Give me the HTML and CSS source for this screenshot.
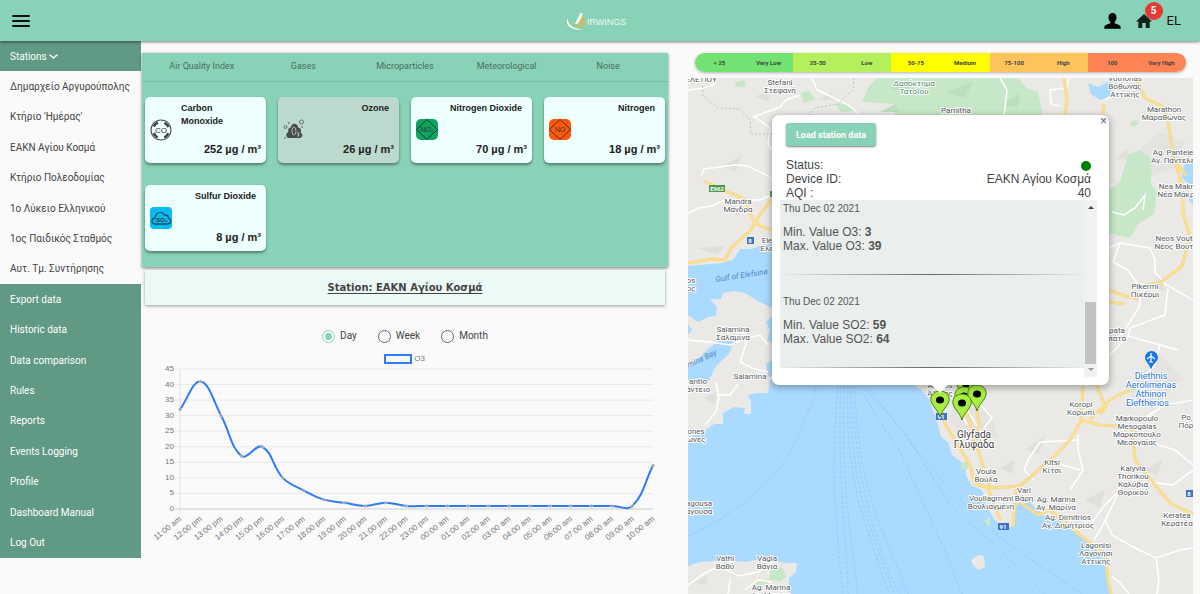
FILE: index.html
```html
<!DOCTYPE html>
<html lang="en">
<head>
    <meta charset="UTF-8">
    <meta name="viewport" content="width=device-width, initial-scale=1.0">
    <title>Airwings</title>
    <link rel="stylesheet" href="styles.css">
</head>
<body>
    <header class="topbar">
        <button class="icon-btn menu-btn" aria-label="Menu">
            <svg width="18" height="12" viewBox="0 0 18 12"><path d="M1 1h16M1 6h16M1 11h16" stroke="#111" stroke-width="2" stroke-linecap="round"/></svg>
        </button>
        <a class="logo" href="#" aria-label="Airwings">
            <svg width="62" height="20" viewBox="0 0 62 20">
                <path d="M2 7C-2 14 5 20 17 18.500C8 18 1 14 2 7Z" fill="#fff"/>
                <path d="M9 13L14 2.500 16.500 2 16 6.500 11.500 13z" fill="#fff"/>
                <path d="M16 5l4.500 9h-2.500l-2-3-3 2z" fill="#e9b23c"/>
                <circle cx="4" cy="11" r="1" fill="#e9b23c"/>
                <circle cx="7" cy="14" r="1" fill="#e9b23c"/>
                <circle cx="11" cy="15" r="1.300" fill="#e9b23c"/>
                <circle cx="15" cy="16" r="1.500" fill="#e9b23c"/>
                <text x="21" y="14">IRWINGS</text>
            </svg>
        </a>
        <nav class="top-actions">
            <button class="icon-btn" aria-label="Profile">
                <svg width="17" height="16" viewBox="0 0 17 16"><path d="M8.500 0C11 0 12.500 1.700 12.500 4.200C12.500 6.500 11.500 8.300 10.500 9.200V10.200C13 11.200 16.700 11.700 16.700 14.500V15.700H.3V14.500C.3 11.700 4 11.200 6.500 10.200V9.200C5.500 8.300 4.500 6.500 4.500 4.200C4.500 1.700 6 0 8.500 0Z"/></svg>
            </button>
            <button class="icon-btn home-btn" aria-label="Home">
                <svg width="16" height="14" viewBox="0 0 16 14"><path d="M8 0L0 7.500h2.300V14h4V9h3.400v5h4V7.500H16z" fill="#12211c"/></svg>
                <span class="badge">5</span>
            </button>
            <button class="icon-btn lang-btn">EL</button>
        </nav>
    </header>

    <div class="page">
        <aside class="sidebar">
            <button class="stations-btn">Stations
                <svg width="9" height="7" viewBox="0 0 9 7"><path d="M1 2l3.500 3L8 2" fill="none" stroke="#fff" stroke-width="1.600" stroke-linecap="round"/></svg>
            </button>
            <ul class="stations">
                <li><a href="#">Δημαρχείο Αργυρούπολης</a></li>
                <li><a href="#">Κτήριο 'Ημέρας'</a></li>
                <li><a href="#">ΕΑΚΝ Αγίου Κοσμά</a></li>
                <li><a href="#">Κτήριο Πολεοδομίας</a></li>
                <li><a href="#">1ο Λύκειο Ελληνικού</a></li>
                <li><a href="#">1ος Παιδικός Σταθμός</a></li>
                <li><a href="#">Αυτ. Τμ. Συντήρησης</a></li>
            </ul>
            <ul class="menu">
                <li><a href="#">Export data</a></li>
                <li><a href="#">Historic data</a></li>
                <li><a href="#">Data comparison</a></li>
                <li><a href="#">Rules</a></li>
                <li><a href="#">Reports</a></li>
                <li><a href="#">Events Logging</a></li>
                <li><a href="#">Profile</a></li>
                <li><a href="#">Dashboard Manual</a></li>
                <li><a href="#">Log Out</a></li>
            </ul>
        </aside>

        <main class="content">
            <section class="data-col">
                <div class="panel">
                    <div class="tabs">
                        <button>Air Quality Index</button>
                        <button>Gases</button>
                        <button>Microparticles</button>
                        <button>Meteorological</button>
                        <button>Noise</button>
                    </div>
                    <div class="cards">
                        <article class="card">
                            <svg class="card-icon" viewBox="0 0 22 22">
                                <circle cx="11" cy="11" r="10" fill="none" stroke="#555" stroke-width="1.200"/>
                                <circle cx="11" cy="11" r="8" fill="none" stroke="#444" stroke-width="2.500" stroke-dasharray="6 6.560" stroke-dashoffset="-3.300"/>
                                <text x="11" y="14" font-size="8">CO</text>
                            </svg>
                            <h3>Carbon Monoxide</h3>
                            <p>252 µg / m³</p>
                        </article>
                        <article class="card selected">
                            <svg class="card-icon" viewBox="0 0 22 22">
                                <path d="M6 19C2.500 19 2.500 14 5.500 13C4.500 10 6 8.500 8 8.500C8 3.500 15 3.500 15 8.500C18 8.500 18.500 12 17.500 13.500C20.500 15 19.500 19 16.500 19Z" fill="#454d49"/>
                                <ellipse cx="11" cy="12" rx="2" ry="4" fill="none" stroke="#aebfb7"/>
                                <path d="M14 14h2l-1 2h1v1h-2" fill="none" stroke="#aebfb7"/>
                                <g fill="none" stroke="#65736c"><circle cx="2.500" cy="8" r="1.500"/><circle cx="18.500" cy="3" r="2"/><circle cx="6" cy="4" r=".5"/><circle cx="2" cy="19" r=".5"/><circle cx="19" cy="8" r=".5"/></g>
                            </svg>
                            <h3>Ozone</h3>
                            <p>26 µg / m³</p>
                        </article>
                        <article class="card">
                            <svg class="card-icon" viewBox="0 0 22 22">
                                <rect width="22" height="21" rx="5" fill="#0ba55f"/>
                                <path d="M11 .5L21.500 10.500 11 20.500.5 10.500z" fill="none" stroke="#15342a"/>
                                <text x="11" y="13" font-size="7">NO₂</text>
                            </svg>
                            <h3>Nitrogen Dioxide</h3>
                            <p>70 µg / m³</p>
                        </article>
                        <article class="card">
                            <svg class="card-icon" viewBox="0 0 22 22">
                                <rect width="22" height="21" rx="5" fill="#ff5a0a"/>
                                <path d="M11 .5L21.500 10.500 11 20.500.5 10.500z" fill="none" stroke="#4a2a1c"/>
                                <text x="11" y="13" font-size="7">NO</text>
                            </svg>
                            <h3>Nitrogen</h3>
                            <p>18 µg / m³</p>
                        </article>
                        <article class="card">
                            <svg class="card-icon" viewBox="0 0 22 22">
                                <rect width="22" height="22" rx="4" fill="#08bcf2"/>
                                <path d="M5.500 17C1 17 1 11.500 5 11C5.500 6 11 3 14.500 8C18 8 18.500 10.500 18.500 11.500C22 12.500 21 17 17.500 17Z" fill="none" stroke="#124e66" stroke-width="1.300"/>
                                <text x="12" y="15" font-size="6" font-weight="bold">SO₂</text>
                            </svg>
                            <h3>Sulfur Dioxide</h3>
                            <p>8 µg / m³</p>
                        </article>
                    </div>
                </div>
                <h2 class="station-title">Station: ΕΑΚΝ Αγίου Κοσμά</h2>
                <form class="range">
                    <label><input type="radio" name="range" checked> Day</label>
                    <label><input type="radio" name="range"> Week</label>
                    <label><input type="radio" name="range"> Month</label>
                </form>
                <svg id="chart" class="chart" viewBox="0 0 526 206" role="img" aria-label="O3"></svg>
            </section>

            <section class="map-col">
                <div class="scale">
                    <div class="very-low"><span>&lt; 25</span><span>Very Low</span></div>
                    <div class="low"><span>25-50</span><span>Low</span></div>
                    <div class="medium"><span>50-75</span><span>Medium</span></div>
                    <div class="high"><span>75-100</span><span>High</span></div>
                    <div class="very-high"><span>100</span><span>Very High</span></div>
                </div>
                <div class="map">
                    <svg id="map" class="map-canvas" viewBox="688 78 505 516" preserveAspectRatio="xMinYMin slice">
                        <defs>
                            <symbol id="pin" viewBox="0 0 20 28" overflow="visible">
                                <path d="M10 27C9 21 .8 15 .8 9.500C.8 4 5 1 10 1s9.200 3 9.200 8.500C19.200 15 11 21 10 27Z" fill="#a6ee3f" stroke="#4b7a1c"/>
                                <ellipse cx="10" cy="10" rx="4" ry="3.500" fill="#000"/>
                            </symbol>
                        </defs>
                        <rect x="688" y="78" width="505" height="516" fill="#aadaff"/>
                        <!-- land -->
                        <g fill="#eae9e5">
                            <path d="M688 78H1193V594H1112L1108 580V565L1100 550L1087 540L1078 531L1065 526L1055 517L1043 516L1036 509L1030 502L1017 504L1012 527L1003 528L995 520L990 512L985 503L982 490L972 486L966 476L965 465L952 455L948 442L941 437L936 418L928 397L921 390L905 380L860 320L800 235L772 241L752 249L740 249L733 260L722 263L688 266Z"/>
                            <path d="M723 293L734 291L745 293L758 301L772 308V380H770L768 393H758L748 395L751 402L751 414L744 414L745 408L734 407L723 413L723 424L714 424L706 430L688 438V380L708 382L716 366L729 354L734 340L722 338L708 349L688 369V335L692 330L688 324V315L698 322L708 317L716 316L717 307L710 299L721 299Z"/>
                            <path d="M688 566L700 562L722 560L745 562L765 558L785 563L797 563L796 572L789 578L789 594H688Z"/>
                            <path d="M974 558L978 555L984 556L985 567L978 570L973 565L971 560Z"/>
                        </g>
                        <g fill="#e0dfdb">
                            <path d="M754 97l18-8-4 12zM765 138l17-6-2 8zM695 248l30-2-8 8zM723 167l18-12-5 16zM818 100l12-8 5 8zM1115 160l12-12 3 10zM1147 285l15-8 2 14zM1025 450l20-14-6 18zM1000 468l15-8-3 14zM1085 500l20-10-5 18zM1144 470l20-12-7 17zM704 398l14-7-4 14zM694 583l14-8-2 10z"/>
                            <path d="M1140 150l20-18 25 10-10 25-25 10zM1125 390l35-36 22 25-30 30zM960 400l30 12 8 25-30 5-20-25z" opacity=".6"/>
                        </g>
                        <!-- parks -->
                        <g fill="#c6e8c8">
                            <path d="M877 78H1018L1027 88L1038 92L1043 116H895V104L862 102L868 88Z"/>
                            <path d="M1109 190L1120 182L1128 155L1140 150L1152 160L1151 184L1157 192L1154 214L1138 224L1130 238L1109 233Z"/>
                            <path d="M735 83l9-3 2 7-10 0zM770 570l12-3 4 10-5 4-11-1zM756 582l13-3-2 5-14 2zM961 464l7-4v9l-7 0zM985 519l5-3 0 12-5-4zM801 93l8-2 6 8-12 4zM835 104l12-1 8 8-14 1zM1130 122l6-2 3 4-7 3z"/>
                        </g>
                        <g fill="#bcdfbf">
                            <path d="M890 88l22-8-5 14zM945 92l28-10-8 16zM1000 105l20-12-2 14zM880 112l15-8 5 8z"/>
                        </g>
                        <g fill="#aadaff">
                            <path d="M1088 83L1098 87L1112 80L1110 97L1100 100L1091 94Z"/>
                            <path d="M1193 162L1184 165L1182 178L1193 188ZM1187 194L1193 193V204L1190 202ZM772 360l-6 4 2 12 4 1zM772 316l-6 6 4 8-3 10 5 3z"/>
                        </g>
                        <!-- ferry lines -->
                        <g fill="none" stroke="#8fc1ec" stroke-dasharray="3 2" stroke-width=".7">
                            <path d="M688 536Q742 512 774 474Q795 455 817 386M838 386Q832 450 835 500T843 594M841 386Q838 440 843 510T848 594M844 386Q842 470 850 530T857 594M848 386Q845 460 864 520T890 594M850 386Q850 465 868 520T895 594M852 386Q855 465 873 525T901 594M855 386Q856 465 882 530T908 594M858 386L902 456L940 540L962 594M862 386L903 430L950 505L1000 550L1045 594M868 386Q950 500 1010 545L1082 594"/>
                        </g>
                        <!-- local roads -->
                        <g fill="none" stroke="#fff" stroke-width="1.500">
                            <path d="M701 176L704 169L735 165L748 166L768 176L772 180M688 213L699 208L712 206L725 200L760 200L772 195M753 117L780 107L786 100L800 95M755 117L770 128L768 145L772 150M688 90L704 88L715 84M812 78L817 90L826 94L848 105L858 113M1000 78L1007 90L1004 116M1069 78L1066 88L1050 90L1051 104L1060 106M1123 78L1114 94L1105 100M688 340L710 342L730 345L748 338L760 335L768 345M748 338L740 362L752 368L768 372M716 382L719 398L716 412L705 425M716 395L730 395L738 384M688 585L705 573L720 566L738 576L758 572L775 560M730 580L728 594M745 590L758 580L772 582"/>
                            <path d="M1109 248L1120 243L1150 248L1155 260L1155 272L1165 284L1193 300M1120 243L1113 262L1128 270L1142 290L1139 307L1122 335L1109 328M1168 288L1165 315L1130 328L1128 336L1160 345L1178 350M1128 336L1109 356M1160 345L1155 365L1140 380M1078 435L1078 450L1083 470L1070 490M1078 440L1040 442L1028 460L1024 470L1034 480M1052 462L1080 470M1075 515L1090 525L1105 505L1118 492L1122 482M1105 520L1112 535L1135 548L1156 558L1180 550L1193 548M1094 540L1102 527L1118 494M1142 440L1175 450L1193 465M1141 420L1165 405L1193 400M1150 482L1173 485L1193 470M1156 558L1159 580L1157 594M1112 576L1122 585L1129 594M1112 212L1124 215L1135 208L1145 195L1143 210"/>
                            <path d="M980 404L992 418L984 428M952 398L968 426M966 408L986 440"/>
                        </g>
                        <g fill="none" stroke="#b7b6b4" stroke-dasharray="2 2" stroke-width=".8">
                            <path d="M702 78L703 96L718 108L740 109L750 120L751 134L772 134M854 78L853 90L838 104L815 108L808 116"/>
                        </g>
                        <!-- main roads -->
                        <g fill="none" stroke="#f3d384" stroke-width="3" stroke-linejoin="round">
                            <path d="M688 263L712 259L725 260L732 247L750 231L759 216L772 199M704 181L730 193L745 199L753 220L760 226L772 230"/>
                            <path d="M1064 78L1067 100L1065 116M1137 80L1145 98L1166 108L1171 140L1174 160L1186 175M1104 104L1103 115M1175 160L1183 190L1183 214L1190 236L1182 266L1160 283L1147 285M1109 290L1122 295L1138 299M1109 302L1125 304"/>
                            <path d="M1083 386L1081 420L1100 425L1120 426M1081 421L1070 440L1050 460L1020 486L990 488L975 484L970 465L958 445L946 426L938 400M1095 382L1106 408L1100 414M1137 386L1110 400L1090 419M1132 428L1135 460L1148 476L1170 503L1193 514M1016 489L1013 527M988 488L1000 520M1020 502L1038 515L1050 510L1080 535L1105 555L1108 580L1111 594M966 410L978 450L990 487M976 405L979 425L976 440"/>
                        </g>
                        <g fill="none" stroke="#fbe08e" stroke-width="2" stroke-linejoin="round">
                            <path d="M688 263L712 259L725 260L732 247L750 231L759 216L772 199M704 181L730 193L745 199L753 220L760 226L772 230"/>
                            <path d="M1064 78L1067 100L1065 116M1137 80L1145 98L1166 108L1171 140L1174 160L1186 175M1104 104L1103 115M1175 160L1183 190L1183 214L1190 236L1182 266L1160 283L1147 285M1109 290L1122 295L1138 299M1109 302L1125 304"/>
                            <path d="M1083 386L1081 420L1100 425L1120 426M1081 421L1070 440L1050 460L1020 486L990 488L975 484L970 465L958 445L946 426L938 400M1095 382L1106 408L1100 414M1137 386L1110 400L1090 419M1132 428L1135 460L1148 476L1170 503L1193 514M1016 489L1013 527M988 488L1000 520M1020 502L1038 515L1050 510L1080 535L1105 555L1108 580L1111 594M966 410L978 450L990 487M976 405L979 425L976 440"/>
                        </g>
                        <!-- road shields -->
                        <g class="shield">
                            <rect x="709" y="185" width="16" height="7" fill="#4b9a4b"/><text x="717" y="191">E962</text>
                            <rect x="747" y="237" width="7" height="7" fill="#3b74c9"/><text x="750" y="243">8</text>
                            <rect x="770" y="191" width="4" height="6" fill="#4b9a4b"/>
                            <rect x="936" y="413" width="11" height="7" fill="#3b74c9"/><text x="941" y="419">91</text>
                            <rect x="998" y="523" width="11" height="7" fill="#3b74c9"/><text x="1003" y="529">91</text>
                            <rect x="1186" y="490" width="9" height="7" fill="#3b74c9"/><text x="1189" y="496">8</text>
                        </g>
                        <g id="labels" class="labels"></g>
                        <g fill="#1a73e8">
                            <path d="M1151 370C1150 364 1145 362 1145 357.500A6.500 6.500 0 0 1 1158 357.500C1158 362 1152 364 1151 370Z"/>
                            <path d="M1151 353v9M1147 359l4-3 4 3M1149 362h4" fill="none" stroke="#fff" stroke-width="1.200"/>
                        </g>
                        <use href="#pin" x="956" y="374" width="20" height="28"/>
                        <use href="#pin" x="954" y="386" width="20" height="28"/>
                        <use href="#pin" x="967" y="384" width="20" height="28"/>
                        <use href="#pin" x="952" y="393" width="20" height="28"/>
                        <use href="#pin" x="930" y="390" width="20" height="28"/>
                    </svg>

                    <div class="popup">
                        <button class="close-btn" aria-label="Close">×</button>
                        <button class="load-btn">Load station data</button>
                        <dl class="info">
                            <div><dt>Status:</dt><dd><span class="dot"></span></dd></div>
                            <div><dt>Device ID:</dt><dd>ΕΑΚΝ Αγίου Κοσμά</dd></div>
                            <div><dt>AQI :</dt><dd>40</dd></div>
                        </dl>
                        <div class="readings">
                            <div class="readings-list">
                                <div class="reading">
                                    <time>Thu Dec 02 2021</time>
                                    <p>Min. Value O3: <b>3</b><br>Max. Value O3: <b>39</b></p>
                                </div>
                                <div class="reading">
                                    <time>Thu Dec 02 2021</time>
                                    <p>Min. Value SO2: <b>59</b><br>Max. Value SO2: <b>64</b></p>
                                </div>
                            </div>
                            <div class="scrollbar">
                                <i class="arrow up"></i>
                                <i class="thumb"></i>
                                <i class="arrow down"></i>
                            </div>
                        </div>
                    </div>
                </div>
            </section>
        </main>
    </div>
    <script src="script.js"></script>
</body>
</html>
```
FILE: styles.css
```css
* {
    box-sizing: border-box;
}

body {
    margin: 0;
    min-height: 100vh;
    display: flex;
    flex-direction: column;
    background-color: #fafafa;
    color: #444;
    font-family: Roboto, "Liberation Sans", sans-serif;
    overflow: hidden;
}

button {
    font-family: inherit;
    border: 0;
    padding: 0;
    background: none;
    cursor: pointer;
}

a {
    color: inherit;
    text-decoration: none;
}

ul {
    list-style: none;
    margin: 0;
    padding: 0;
}

/* header */
.topbar {
    position: relative;
    z-index: 2;
    display: grid;
    grid-template-columns: 1fr auto 1fr;
    align-items: center;
    height: 41px;
    padding: 0 19px 0 12px;
    background-color: #88d2b7;
    box-shadow: 0 1px 3px rgba(0, 0, 0, 0.5);
}

.icon-btn {
    display: flex;
    color: #111;
}

.logo svg {
    display: block;
}

.logo text {
    font: 9px "Liberation Sans", sans-serif;
    fill: #eefaf5;
}

.top-actions {
    display: flex;
    justify-content: flex-end;
    align-items: center;
    gap: 15px;
}

.home-btn {
    position: relative;
}

.badge {
    position: absolute;
    top: -12px;
    left: 9px;
    width: 18px;
    border-radius: 50%;
    background-color: #e53935;
    color: #fff;
    font-size: 10px;
    font-weight: bold;
    line-height: 18px;
    text-align: center;
}

.lang-btn {
    font-size: 13px;
}

.page {
    flex: 1;
    display: flex;
    align-items: flex-start;
}

/* sidebar */
.sidebar {
    display: flex;
    flex-direction: column;
    width: 141px;
    height: 87vh;
    flex-shrink: 0;
    background-color: #609984;
    font-size: 10px;
    color: #fff;
}

.stations-btn {
    flex: 1;
    padding: 0 10px;
    color: #fff;
    font-size: 10px;
    text-align: left;
}

.stations,
.menu {
    display: flex;
    flex-direction: column;
}

.stations {
    flex: 7;
    background-color: #fafafa;
    color: #444;
}

.menu {
    flex: 9;
}

.sidebar li {
    flex: 1;
    display: flex;
    align-items: center;
    padding-left: 10px;
    white-space: nowrap;
}

.content {
    flex: 1;
    display: grid;
    grid-template-columns: 526fr 505fr;
    gap: 20px;
    padding: 12px 7px 0 1px;
}

/* gases panel */
.panel {
    background-color: #88d2b7;
    box-shadow: 0 1px 3px rgba(0, 0, 0, 0.5);
}

.tabs {
    display: grid;
    grid-template-columns: repeat(5, 1fr);
    padding: 0 9px;
    border-bottom: 1px solid #78bfa5;
}

.tabs button {
    height: 28px;
    padding-bottom: 3px;
    color: #47705f;
    font-size: 9px;
}

.cards {
    display: grid;
    grid-template-columns: repeat(4, 1fr);
    gap: 22px 12px;
    padding: 15px 3px 16px;
}

.card {
    display: grid;
    grid-template-columns: 22px 1fr;
    grid-template-rows: 38px 1fr;
    height: 66px;
    padding: 5px;
    border-radius: 5px;
    background-color: #edfffe;
    box-shadow: 0 2px 3px rgba(0, 0, 0, 0.4);
    color: #222;
    font-family: "Liberation Sans", sans-serif;
}

.card.selected {
    background-color: #bcd9cd;
}

.card-icon {
    grid-row: 1 / 3;
    align-self: center;
    width: 22px;
    height: 22px;
}

.card-icon text {
    text-anchor: middle;
    fill: #333;
}

.card h3 {
    justify-self: end;
    max-width: 75px;
    margin: 0 5px 0 0;
    font-size: 9px;
    line-height: 13px;
}

.card p {
    margin: 0;
    font-size: 11px;
    font-weight: bold;
    line-height: 18px;
    text-align: right;
}

.station-title {
    margin: 3px 3px 0;
    background-color: #ebfaf6;
    box-shadow: 0 1px 3px rgba(0, 0, 0, 0.4);
    font-family: "DejaVu Sans", sans-serif;
    font-size: 10px;
    font-weight: bold;
    line-height: 35px;
    text-align: center;
    text-decoration: underline;
    text-underline-offset: 2px;
}

.range {
    display: flex;
    justify-content: center;
    gap: 21px;
    padding-top: 24px;
    font-size: 10px;
}

.range label {
    display: flex;
    align-items: center;
    gap: 5px;
    line-height: 14px;
}

.range input {
    appearance: none;
    width: 13px;
    height: 13px;
    margin: 0;
    border: 1px solid #666;
    border-radius: 50%;
}

.range input:checked {
    border-color: #88d2b7;
    background: radial-gradient(circle, #88d2b7 3px, transparent 4px);
}

.chart {
    display: block;
    width: 100%;
    margin-top: 1px;
}

.chart text {
    font: 8px "Liberation Sans", sans-serif;
    fill: #777;
    text-anchor: end;
}

/* air quality scale */
.scale {
    display: grid;
    grid-template-columns: repeat(5, 1fr);
    margin: 0 7px 6px;
    border-radius: 10px;
    overflow: hidden;
    box-shadow: 0 1px 3px rgba(0, 0, 0, 0.3);
    font-size: 6px;
    font-weight: bold;
    line-height: 19px;
    text-align: center;
}

.scale div {
    display: grid;
    grid-template-columns: 1fr 1fr;
}

.very-low { background-color: #72e272; }
.low { background-color: #b3f05c; }
.medium { background-color: #ffff00; }
.high { background-color: #ffc35c; }
.very-high { background-color: #ff8455; }

/* map */
.map {
    position: relative;
    height: calc(100vh - 78px);
}

.map-canvas {
    display: block;
    width: 100%;
    height: 100%;
}

.labels text {
    fill: #555a60;
    stroke: #fff;
    stroke-width: 2px;
    stroke-linejoin: round;
    paint-order: stroke;
    text-anchor: middle;
    font-size: 8px;
}

.labels .town {
    font-size: 10px;
    fill: #444;
}

.labels .poi {
    font-size: 9px;
    fill: #1a73e8;
}

.labels .park {
    fill: #4e8a62;
}

.labels .water {
    fill: #5088c8;
    stroke: none;
    font-style: italic;
}

.shield text {
    fill: #fff;
    font-size: 6px;
    font-weight: bold;
    text-anchor: middle;
}

.popup {
    position: absolute;
    top: 37px;
    left: 84px;
    width: 337px;
    padding: 8px 12px 8px 8px;
    border-radius: 7px;
    background-color: #fff;
    box-shadow: 0 2px 7px 1px rgba(0, 0, 0, 0.3);
    font-family: "Liberation Sans", sans-serif;
    font-size: 12px;
    line-height: 14px;
}

.popup::after {
    content: "";
    position: absolute;
    top: 100%;
    left: 160px;
    border: 8px solid transparent;
    border-top-color: #fff;
    border-bottom: 0;
}

.close-btn {
    position: absolute;
    top: 0;
    right: 2px;
    color: #555;
    font-size: 12px;
    line-height: 12px;
}

.load-btn {
    display: block;
    height: 23px;
    margin-left: 6px;
    padding: 0 10px;
    border-radius: 3px;
    background-color: #88d2b7;
    box-shadow: 0 1px 2px rgba(0, 0, 0, 0.5);
    color: #fff;
    font-family: Roboto, sans-serif;
    font-size: 9px;
    font-weight: bold;
}

.info {
    margin: 12px 6px 0;
}

.info div {
    display: flex;
    justify-content: space-between;
}

.info dd {
    margin: 0;
}

.dot {
    display: block;
    width: 10px;
    height: 10px;
    margin-top: 3px;
    border-radius: 50%;
    background-color: #008000;
}

.readings {
    display: flex;
    height: 177px;
    color: #555;
}

.readings-list {
    flex: 1;
}

.reading {
    height: 75px;
    padding: 1px 3px;
    background-color: #eaeeed;
    border-bottom: 1px solid;
    border-image: linear-gradient(to right, #eaeeed, #666, #eaeeed) 1;
}

.reading + .reading {
    height: 93px;
    padding-top: 19px;
}

.reading time {
    font-size: 10px;
}

.reading p {
    margin: 9px 0 0;
}

.scrollbar {
    display: flex;
    flex-direction: column;
    align-items: center;
    width: 13px;
    padding: 6px 0;
    background-color: #f1f1f1;
}

.thumb {
    width: 11px;
    height: 62px;
    margin: auto 0 4px;
    background-color: #c1c1c1;
}

.arrow {
    border: 3px solid transparent;
}

.up {
    border-top: 0;
    border-bottom-color: #444;
}

.down {
    border-bottom: 0;
    border-top-color: #999;
}
```
FILE: script.js
```javascript
const SVG = 'http://www.w3.org/2000/svg';

function add(parent, tag, attrs, text) {
    const el = document.createElementNS(SVG, tag);
    for (const key in attrs) el.setAttribute(key, attrs[key]);
    if (text) el.textContent = text;
    parent.appendChild(el);
    return el;
}

function drawChart(values) {
    const chart = document.getElementById('chart');
    const left = 38, right = 511, top = 25, bottom = 165, max = 45;
    const step = (right - left) / (values.length - 1);
    const pts = values.map((v, i) => [left + i * step, bottom - v * (bottom - top) / max]);

    add(chart, 'rect', { x: 243, y: 11, width: 26, height: 8, fill: 'none', stroke: '#2f7bf6', 'stroke-width': 2 });
    add(chart, 'text', { x: 283, y: 17 }, 'O3');

    for (let v = 0; v <= max; v += 5) {
        const y = bottom - v * (bottom - top) / max;
        add(chart, 'path', { d: `M${left - 6} ${y}H${right}`, stroke: v ? '#e8e8e8' : '#ccc' });
        add(chart, 'text', { x: left - 6, y: y + 2 }, String(v));
    }
    add(chart, 'path', { d: `M${left} ${top}V${bottom + 5}`, stroke: '#e2e2e2' });

    // smooth curve, control points follow the neighbours
    const ctrl = pts.map((p, i) => {
        const a = pts[i - 1] || p, b = pts[i + 1] || p;
        const d1 = Math.hypot(p[0] - a[0], p[1] - a[1]);
        const d2 = Math.hypot(b[0] - p[0], b[1] - p[1]);
        const f1 = 0.4 * d1 / (d1 + d2), f2 = 0.4 * d2 / (d1 + d2);
        return {
            before: [p[0] - f1 * (b[0] - a[0]), p[1] - f1 * (b[1] - a[1])],
            after: [p[0] + f2 * (b[0] - a[0]), p[1] + f2 * (b[1] - a[1])]
        };
    });
    let d = 'M' + pts[0];
    for (let i = 1; i < pts.length; i++) {
        d += `C${ctrl[i - 1].after} ${ctrl[i].before} ${pts[i]}`;
    }
    add(chart, 'path', { d: d, fill: 'none', stroke: '#2f7bf6', 'stroke-width': 2 });

    pts.forEach((p, i) => {
        const hour = (i + 11) % 24;
        const label = String(hour).padStart(2, '0') + ':00 ' + (hour < 12 ? 'am' : 'pm');
        add(chart, 'circle', { cx: p[0], cy: p[1], r: 1.5, fill: '#999', stroke: '#ddd', 'stroke-width': 0.5 });
        add(chart, 'text', { transform: `translate(${p[0] + 2} ${bottom + 11}) rotate(-38)` }, label);
    });
}

// x, y of the first baseline, lines, class, rotation
const places = [
    [701, 82, ['ΕΛΕΤΙΟΥ']],
    [780, 85, ['Stefani', 'Στεφανή']],
    [914, 86, ['Δασόκτημα', 'Τατοΐου'], 'park'],
    [956, 113, ['Parnitha']],
    [1125, 81, ['Vothonas', 'Βόθωνας', 'Αττικής']],
    [1164, 112, ['Marathon', 'Μαραθώνας']],
    [1173, 155, ['Ag. Pantele', 'Αγ. Παντελε']],
    [1176, 189, ['Nea Makr', 'Νέα Μάκρ']],
    [1174, 241, ['Neos Vout', 'Νέος Βουτ']],
    [1145, 289, ['Pikermi', 'Πικέρμι']],
    [1117, 333, ['pata', 'πάτα']],
    [738, 204, ['Mandra', 'Μάνδρα']],
    [767, 243, ['Ele', 'Ελε']],
    [691, 283, ['os', 'ος']],
    [742, 278, ['Gulf of Elefsina'], 'water', -9],
    [733, 332, ['Salamina', 'Σαλαμίνα']],
    [750, 379, ['Salamina']],
    [703, 361, ['mina Bay'], 'water', -25],
    [698, 384, ['antio', 'άντειο']],
    [696, 434, ['ones', 'ώνες']],
    [699, 506, ['agousa', 'αγούσα']],
    [725, 561, ['Vathi', 'Βαθύ']],
    [767, 561, ['Vagia', 'Βάγια']],
    [771, 590, ['Ag. Marina', 'Αγ. Μαρίνα']],
    [940, 388, ['Alimos', 'Άλιμος']],
    [974, 438, ['Glyfada', 'Γλυφάδα'], 'town'],
    [986, 474, ['Voula', 'Βούλα']],
    [1024, 493, ['Vari', 'Βάρη']],
    [991, 501, ['Vouliagmeni', 'Βουλιαγμένη']],
    [1056, 502, ['Ag. Marina', 'Αγ. Μαρίνα']],
    [1068, 520, ['Ag. Dimitrios', 'Αγ. Δημήτριος']],
    [1052, 465, ['Kitsi', 'Κίτσι']],
    [1081, 407, ['Koropi', 'Κορωπί']],
    [1137, 421, ['Markopoulo', 'Mesogaias', 'Μαρκόπουλο', 'Μεσογαίας']],
    [1133, 471, ['Kalyvia', 'Thorikou', 'Καλύβια', 'Θορικού']],
    [1096, 548, ['Lagonisi', 'Λαγονήσι', 'Αττικής']],
    [1177, 518, ['Keratea', 'Κερατέα']],
    [1186, 420, ['Po', 'Πόρ']],
    [1151, 379, ['Diethnis', 'Aerolimenas', 'Athinon', 'Eleftherios...'], 'poi']
];

function drawLabels() {
    const group = document.getElementById('labels');
    places.forEach(([x, y, lines, cls, angle]) => {
        const lineHeight = cls === 'town' ? 10 : cls === 'poi' ? 9 : 8;
        lines.forEach((line, i) => {
            const attrs = { x: x, y: y + i * lineHeight, class: cls || 'place' };
            if (angle) attrs.transform = `rotate(${angle} ${x} ${y})`;
            add(group, 'text', attrs, line);
        });
    });
}

drawChart([32, 41, 30, 17, 20, 10, 6, 3, 2, 1, 2, 1, 1, 1, 1, 1, 1, 1, 1, 1, 1, 1, 1, 14]);
drawLabels();
```
